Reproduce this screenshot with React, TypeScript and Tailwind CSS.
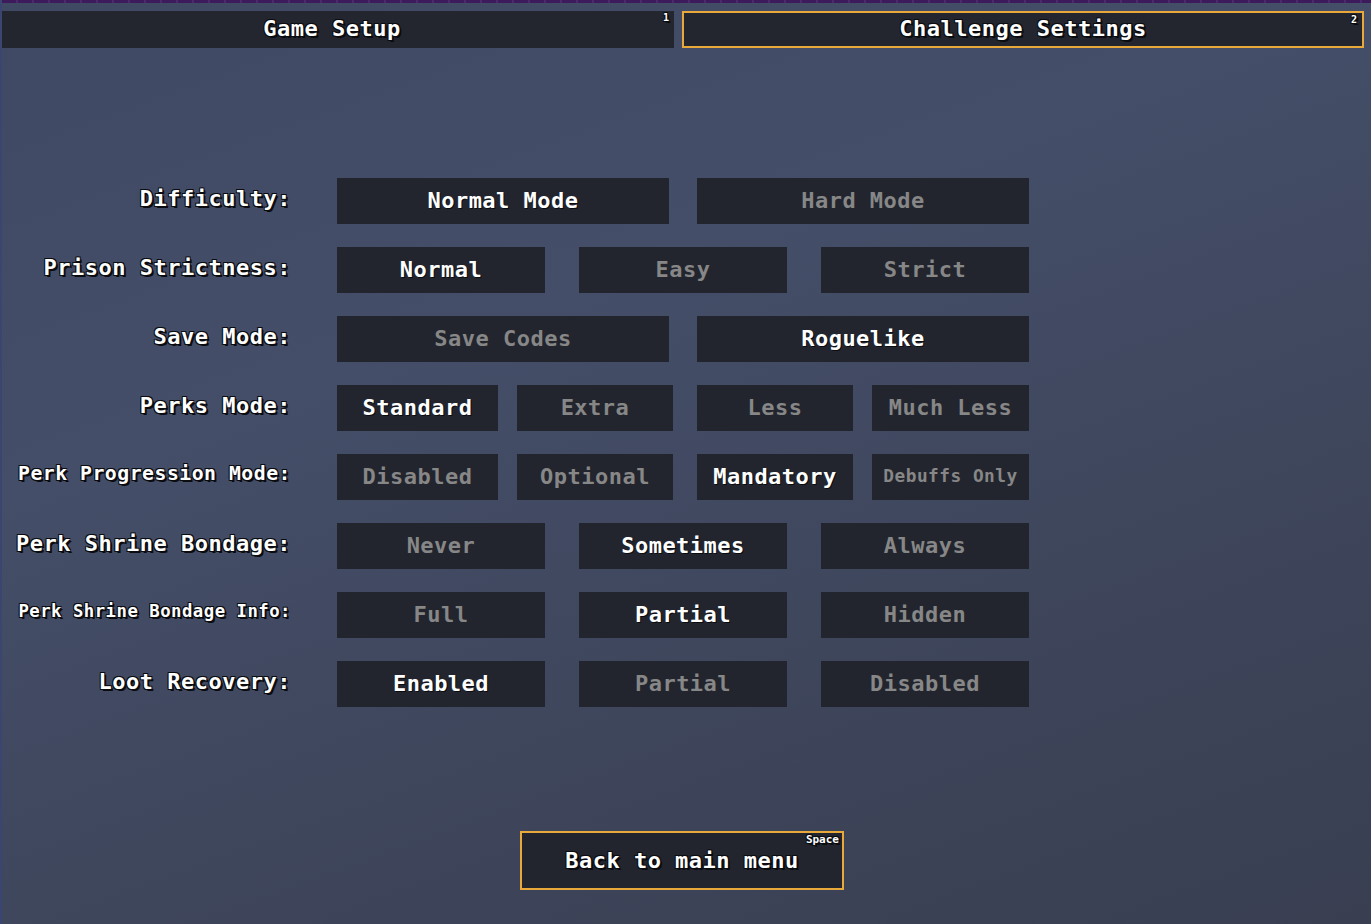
import React from "react";

const FONT = "font-['DejaVu_Sans_Mono',monospace] font-bold";
const OUTLINE =
  "[text-shadow:1px_1px_0_#0b0c10,-1px_-1px_0_#0b0c10,1px_-1px_0_#0b0c10,-1px_1px_0_#0b0c10,2px_2px_0_#0b0c10]";

type Opt = { text: string; on?: boolean; size?: string; w?: string };
type Row = {
  label: string;
  labelSize?: string;
  cols: "2" | "3" | "4";
  options: Opt[];
};

// four-wide rows aren't evenly spaced in the game, so widths/margins are per slot
const FOUR = ["w-[161px]", "ml-[19px] w-[156px]", "ml-[24px] w-[156px]", "ml-[19px] w-[157px]"];

const ROWS: Row[] = [
  {
    label: "Difficulty:",
    cols: "2",
    options: [{ text: "Normal Mode", on: true }, { text: "Hard Mode" }],
  },
  {
    label: "Prison Strictness:",
    cols: "3",
    options: [{ text: "Normal", on: true }, { text: "Easy" }, { text: "Strict" }],
  },
  {
    label: "Save Mode:",
    cols: "2",
    options: [{ text: "Save Codes" }, { text: "Roguelike", on: true }],
  },
  {
    label: "Perks Mode:",
    cols: "4",
    options: [{ text: "Standard", on: true }, { text: "Extra" }, { text: "Less" }, { text: "Much Less" }],
  },
  {
    label: "Perk Progression Mode:",
    labelSize: "text-[19.8px]",
    cols: "4",
    options: [
      { text: "Disabled" },
      { text: "Optional" },
      { text: "Mandatory", on: true },
      { text: "Debuffs Only", size: "text-[17.8px]" },
    ],
  },
  {
    label: "Perk Shrine Bondage:",
    cols: "3",
    options: [{ text: "Never" }, { text: "Sometimes", on: true }, { text: "Always" }],
  },
  {
    label: "Perk Shrine Bondage Info:",
    labelSize: "text-[17.3px]",
    cols: "3",
    options: [{ text: "Full" }, { text: "Partial", on: true }, { text: "Hidden" }],
  },
  {
    label: "Loot Recovery:",
    cols: "3",
    options: [{ text: "Enabled", on: true }, { text: "Partial" }, { text: "Disabled" }],
  },
];

function Option({ text, on, size, w }: Opt) {
  return (
    <div
      className={`flex h-[46px] items-center justify-center bg-[#22252e] pb-[2px] ${w ?? ""} ${
        size ?? "text-[22px]"
      } tracking-[0.5px] ${on ? "text-white [text-shadow:1px_1px_0_#0b0c10]" : "text-[#878787]"}`}
    >
      {text}
    </div>
  );
}

function Tab({ title, hotkey, active }: { title: string; hotkey: string; active?: boolean }) {
  return (
    <div
      className={`relative flex h-[37px] items-center justify-center bg-[#23262f] pb-[2px] text-[22px] tracking-[0.5px] text-white ${OUTLINE} ${
        active ? "border-2 border-[#e9a83a]" : "pr-[12px]"
      }`}
    >
      {title}
      <span className="absolute right-[5px] top-[2px] text-[10px] leading-none tracking-normal text-white">
        {hotkey}
      </span>
    </div>
  );
}

export default function App() {
  return (
    <div
      className={`flex h-[924px] w-[1371px] flex-col overflow-hidden border-l-2 border-[#3a4670] bg-[linear-gradient(160deg,#404963_0%,#444e68_35%,#3d4459_75%,#393f51_100%)] ${FONT}`}
    >
      {/* top strip */}
      <div className="h-[3px] bg-[repeating-linear-gradient(90deg,#3c1a5c_0px,#3c1a5c_14px,#4a2a6e_14px,#4a2a6e_16px)]" />

      {/* tabs */}
      <div className="mt-[8px] grid grid-cols-[672px_682px] gap-x-[8px]">
        <Tab title="Game Setup" hotkey="1" />
        <Tab title="Challenge Settings" hotkey="2" active />
      </div>

      {/* settings */}
      <div className="mt-[130px] grid grid-cols-[289px_692px] gap-x-[46px] gap-y-[23px]">
        {ROWS.map((row) => (
          <React.Fragment key={row.label}>
            <div
              className={`flex h-[46px] items-center justify-end pb-[6px] text-white ${OUTLINE} ${
                row.labelSize ?? "text-[22px]"
              } tracking-[0.5px]`}
            >
              {row.label}
            </div>
            {row.cols === "4" ? (
              <div className="flex">
                {row.options.map((o, i) => (
                  <Option key={i} {...o} w={FOUR[i]} />
                ))}
              </div>
            ) : (
              <div className={row.cols === "2" ? "grid grid-cols-2 gap-x-[28px]" : "grid grid-cols-3 gap-x-[34px]"}>
                {row.options.map((o, i) => (
                  <Option key={i} {...o} />
                ))}
              </div>
            )}
          </React.Fragment>
        ))}
      </div>

      {/* back button */}
      <div className="mt-[124px] flex pl-[518px]">
        <div
          className={`relative flex h-[59px] w-[324px] items-center justify-center border-2 border-[#e9a83a] bg-[#22252e] text-[22px] tracking-[0.5px] text-white ${OUTLINE}`}
        >
          Back to main menu
          <span className="absolute right-[3px] top-[1px] text-[11px] leading-none tracking-normal">Space</span>
        </div>
      </div>
    </div>
  );
}
